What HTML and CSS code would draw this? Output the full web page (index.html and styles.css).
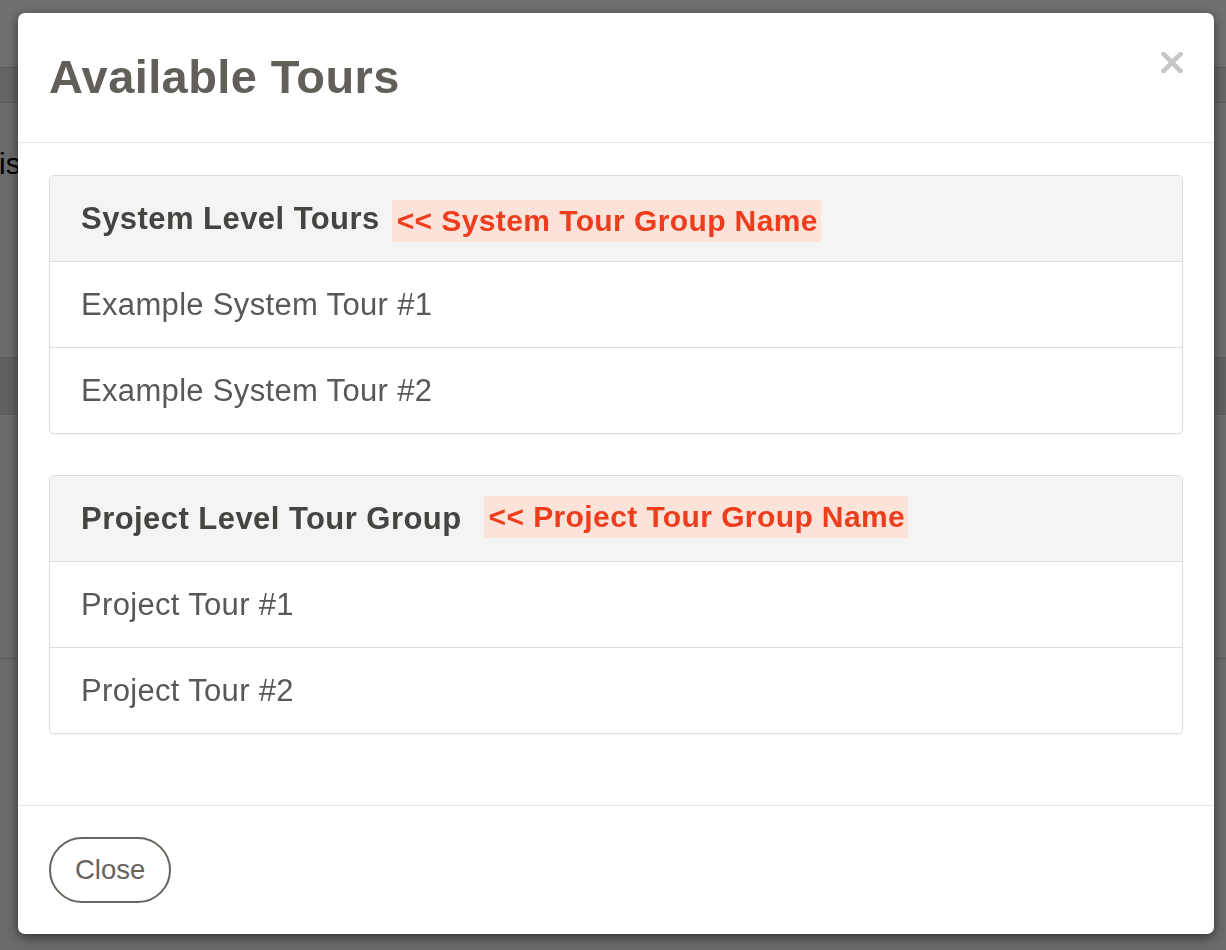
FILE: index.html
```html
<!DOCTYPE html>
<html lang="en">
<head>
<meta charset="utf-8">
<title>Available Tours</title>
<link rel="stylesheet" href="styles.css">
</head>
<body>
<div class="page">
  <div class="page-top"></div>
  <div class="page-nav"></div>
  <div class="page-content">
    <p class="page-text">is content</p>
    <div class="page-band"></div>
    <div class="page-block"></div>
  </div>
</div>

<div class="backdrop">
  <div class="modal" role="dialog" aria-labelledby="modal-title">
    <div class="modal-header">
      <h4 class="modal-title" id="modal-title">Available Tours</h4>
      <button class="close" type="button" aria-label="Close">
        <svg width="22" height="21" viewBox="0 0 22 21" aria-hidden="true">
          <path d="M2.5 2 L19.5 19 M19.5 2 L2.5 19" stroke="#c7c7c7" stroke-width="4.6" stroke-linecap="square" fill="none"/>
        </svg>
      </button>
    </div>
    <div class="modal-body">
      <div class="panel">
        <div class="panel-heading">
          <span class="panel-title">System Level Tours</span>
          <span class="note note-low">&lt;&lt; System Tour Group Name</span>
        </div>
        <div class="list-item">Example System Tour #1</div>
        <div class="list-item">Example System Tour #2</div>
      </div>
      <div class="panel">
        <div class="panel-heading">
          <span class="panel-title">Project Level Tour Group</span>
          <span class="note note-high">&lt;&lt; Project Tour Group Name</span>
        </div>
        <div class="list-item">Project Tour #1</div>
        <div class="list-item">Project Tour #2</div>
      </div>
    </div>
    <div class="modal-footer">
      <button class="btn" type="button">Close</button>
    </div>
  </div>
</div>
</body>
</html>
```

FILE: styles.css
```css
* {
  box-sizing: border-box;
}

html,
body {
  margin: 0;
  padding: 0;
  height: 100%;
  overflow: hidden;
}

body {
  font-family: "Liberation Sans", Arial, Helvetica, sans-serif;
  background: #f2f2f2;
  color: #333;
}

/* underlying page (seen through the backdrop) */
.page {
  height: 100%;
}

.page-top {
  height: 68px;
  background: #ffffff;
  border-bottom: 1px solid #c9c9c9;
}

.page-nav {
  height: 35px;
  background: #e6e6e6;
  border-bottom: 1px solid #d0d0d0;
}

.page-content {
  display: flex;
  flex-direction: column;
}

.page-text {
  margin: 44px 0 0 -1px;
  font-size: 30px;
  line-height: 34px;
  white-space: nowrap;
  color: #000;
}

.page-band {
  height: 58px;
  margin-top: 176px;
  background: #dcdcdc;
  border-top: 1px solid #cfcfcf;
  border-bottom: 1px solid #cfcfcf;
}

.page-block {
  height: 244px;
  background: #f4f4f4;
  border-bottom: 1px solid #cfcfcf;
}

/* modal */
.backdrop {
  position: fixed;
  inset: 0;
  background: rgba(0, 0, 0, 0.56);
  display: flex;
  align-items: flex-start;
  padding: 13px 0 0 18px;
}

.modal {
  width: 1196px;
  background: #fff;
  border-radius: 7px;
  box-shadow: 0 3px 12px rgba(0, 0, 0, 0.55);
  display: flex;
  flex-direction: column;
}

.modal-header {
  display: flex;
  justify-content: space-between;
  align-items: flex-start;
  padding: 38px 31px 39px;
  border-bottom: 1px solid #e5e5e5;
}

.modal-title {
  margin: 0;
  font-size: 47px;
  line-height: 52px;
  letter-spacing: 0.4px;
  font-weight: bold;
  color: #625f5a;
}

.close {
  margin: 1px 0 0;
  padding: 0;
  border: 0;
  background: transparent;
  width: 22px;
  height: 21px;
  display: flex;
}

.modal-body {
  padding: 32px 31px 30px;
  display: flex;
  flex-direction: column;
  gap: 41px;
}

.modal-body .panel:last-child {
  margin-bottom: 41px;
}

.panel {
  border: 1px solid #dddddd;
  border-radius: 5px;
  box-shadow: 0 1px 2px rgba(0, 0, 0, 0.06);
  overflow: hidden;
}

.panel-heading {
  height: 86px;
  display: flex;
  align-items: center;
  padding: 0 31px;
  background: #f4f4f4;
  border-bottom: 1px solid #dddddd;
}

.panel-title {
  font-size: 31px;
  letter-spacing: 0.45px;
  font-weight: bold;
  color: #464441;
}

.note {
  display: inline-block;
  margin-left: 12px;
  padding: 0 3px 0 5px;
  line-height: 42px;
  background: #fbe3da;
  color: #ee3d1c;
  font-size: 30px;
  letter-spacing: 0.4px;
  font-weight: bold;
}

.note-low {
  margin-top: 4px;
}

.note-high {
  margin-left: 22px;
  margin-bottom: 4px;
}

.list-item {
  height: 85px;
  display: flex;
  align-items: center;
  padding: 0 31px;
  font-size: 31px;
  letter-spacing: 0.33px;
  color: #585858;
}

.list-item + .list-item {
  height: 86px;
  border-top: 1px solid #dddddd;
}

.modal-footer {
  padding: 31px;
  border-top: 1px solid #e5e5e5;
  display: flex;
}

.btn {
  font-family: "Liberation Sans", Arial, Helvetica, sans-serif;
  font-size: 27.5px;
  line-height: 40px;
  padding: 11px 24px;
  border: 2px solid #67635d;
  border-radius: 40px;
  background: #fff;
  color: #67635d;
}
```
